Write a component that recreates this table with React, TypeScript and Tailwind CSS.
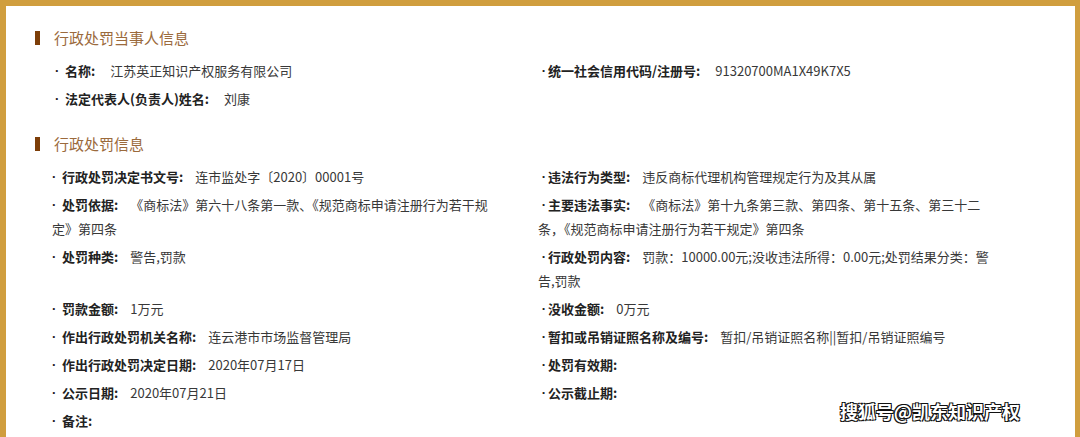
type Field = {
  label: string
  value?: string
}

type Section = {
  title: string
  loose?: boolean
  rows: [Field, Field | null][]
}

const sections: Section[] = [
  {
    title: "行政处罚当事人信息",
    loose: true,
    rows: [
      [
        { label: "名称:", value: "江苏英正知识产权服务有限公司" },
        { label: "统一社会信用代码/注册号:", value: "91320700MA1X49K7X5" },
      ],
      [{ label: "法定代表人(负责人)姓名:", value: "刘康" }, null],
    ],
  },
  {
    title: "行政处罚信息",
    rows: [
      [
        { label: "行政处罚决定书文号:", value: "连市监处字〔2020〕00001号" },
        { label: "违法行为类型:", value: "违反商标代理机构管理规定行为及其从属" },
      ],
      [
        { label: "处罚依据:", value: "《商标法》第六十八条第一款、《规范商标申请注册行为若干规定》第四条" },
        {
          label: "主要违法事实:",
          value: "《商标法》第十九条第三款、第四条、第十五条、第三十二条，《规范商标申请注册行为若干规定》第四条",
        },
      ],
      [
        { label: "处罚种类:", value: "警告,罚款" },
        { label: "行政处罚内容:", value: "罚款：10000.00元;没收违法所得：0.00元;处罚结果分类：警告,罚款" },
      ],
      [
        { label: "罚款金额:", value: "1万元" },
        { label: "没收金额:", value: "0万元" },
      ],
      [
        { label: "作出行政处罚机关名称:", value: "连云港市市场监督管理局" },
        { label: "暂扣或吊销证照名称及编号:", value: "暂扣/吊销证照名称||暂扣/吊销证照编号" },
      ],
      [
        { label: "作出行政处罚决定日期:", value: "2020年07月17日" },
        { label: "处罚有效期:" },
      ],
      [
        { label: "公示日期:", value: "2020年07月21日" },
        { label: "公示截止期:" },
      ],
      [{ label: "备注:" }, null],
    ],
  },
]

function Item({ field, right, loose }: { field: Field | null; right?: boolean; loose?: boolean }) {
  if (!field) return <div />
  return (
    <p className="text-[13px] leading-[24px] text-[#383838] break-all">
      <span
        className={
          right
            ? "inline-block align-top h-[24px] w-[10px] pr-[2px] text-right font-['Liberation_Sans'] font-bold text-[#222]"
            : loose
              ? "inline-block align-top h-[24px] w-[13px] pl-[3px] font-['Liberation_Sans'] font-bold text-[#222]"
              : "inline-block align-top h-[24px] w-[10px] font-['Liberation_Sans'] font-bold text-[#222]"
        }
      >
        ·
      </span>
      <span className={loose ? "mr-[15px] font-bold text-[#222]" : "mr-3 font-bold text-[#222]"}>
        {field.label}
      </span>
      {field.value}
    </p>
  )
}

export default function App() {
  return (
    <div
      className="relative w-[1080px] h-[437px] overflow-hidden bg-white border-t-[6px] border-l-[6px] border-r-[5px] border-[#d09e3e]"
      style={{ fontFamily: '"Noto Sans CJK SC", "Noto Sans", sans-serif' }}
    >
      <div className="pl-[29px] pt-[22px] flex flex-col gap-[23px]">
        {sections.map((section) => (
          <section key={section.title}>
            <h3 className="flex items-center h-[20px] text-[15px] font-normal text-[#9b6a3c]">
              <span className="w-[5px] h-[14px] bg-[#7d3e08] mr-[14px]" />
              {section.title}
            </h3>
            <div className="mt-[11px] ml-[17px] grid grid-cols-[451px_454px] gap-x-[35px] gap-y-[4px]">
              {section.rows.map(([left, right], i) => (
                <div key={i} className="contents">
                  <Item field={left} loose={section.loose} />
                  <Item field={right} right loose={section.loose} />
                </div>
              ))}
            </div>
          </section>
        ))}
      </div>

      <div className="absolute right-[55px] top-[392px] text-[18px] leading-[26px] font-bold text-white [text-shadow:1px_1px_0_#111,-1px_-1px_0_#111,1px_-1px_0_#111,-1px_1px_0_#111]">
        搜狐号@凯东知识产权
      </div>
    </div>
  )
}
